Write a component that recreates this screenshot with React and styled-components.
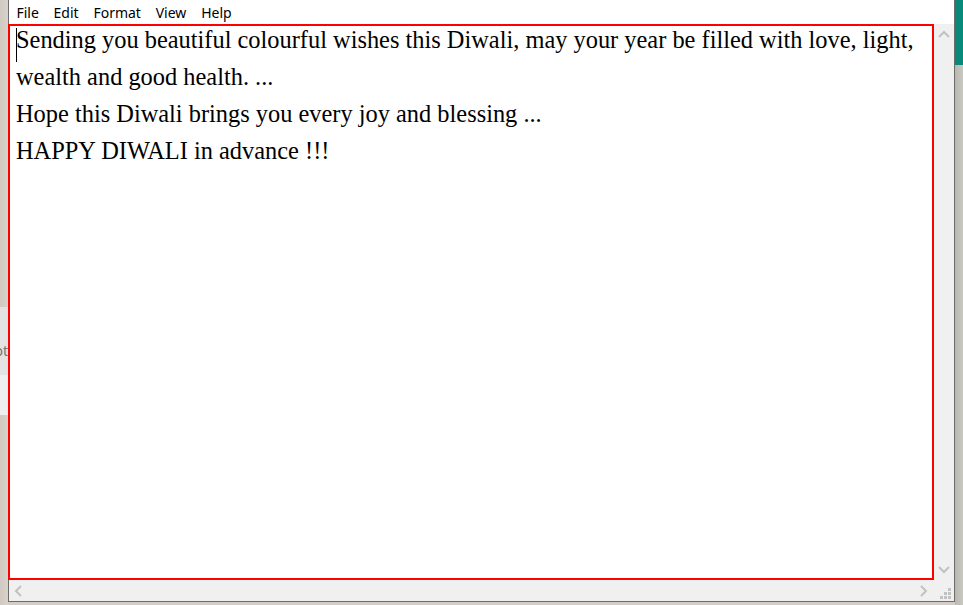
import React from "react";
import styled, { createGlobalStyle } from "styled-components";

const Global = createGlobalStyle`
  html, body { margin: 0; padding: 0; overflow: hidden; }
  body { width: 963px; height: 605px; background: #d3cdc6; }
`;

const Screen = styled.div`
  width: 963px;
  height: 605px;
  display: flex;
  background: #d3cdc6;
  overflow: hidden;
`;

const LeftDesk = styled.div`
  width: 8px;
  display: flex;
  flex-direction: column;
  background: linear-gradient(90deg, #d0cac3, #d8d2cb);
`;

const DeskGap = styled.div`
  height: ${(p) => p.$h}px;
  flex: none;
`;

const DeskPanel = styled.div`
  height: ${(p) => p.$h}px;
  flex: none;
  background: ${(p) => p.$bg};
  overflow: hidden;
  position: relative;
  font-family: "Noto Sans", sans-serif;
  font-size: 14px;
  color: #777;
`;

const ClippedText = styled.span`
  position: absolute;
  right: 0;
  top: ${(p) => p.$top}px;
  white-space: nowrap;
`;

const RightDesk = styled.div`
  width: 8px;
  display: flex;
  flex-direction: column;
`;

const Teal = styled.div`
  height: 65px;
  background: #078a79;
`;

const GreyStrip = styled.div`
  flex: 1;
  background: linear-gradient(90deg, #b9b8b0, #c8c8c1);
`;

const Column = styled.div`
  display: flex;
  flex-direction: column;
`;

const Window = styled.div`
  width: 945px;
  height: 601px;
  display: flex;
  flex-direction: column;
  background: #fff;
  border-left: 1px solid #6c6c6c;
  border-right: 1px solid #6c6c6c;
  border-bottom: 1px solid #6c6c6c;
`;

const MenuBar = styled.div`
  height: 24px;
  flex: none;
  display: flex;
  align-items: center;
  padding-left: 0;
  background: #fff;
  font-family: "Noto Sans", "Open Sans", sans-serif;
  font-size: 14px;
  color: #000;
`;

const MenuItem = styled.span`
  padding: 0 7.4px;
  line-height: 24px;
  margin-top: 1px;
`;

const Body = styled.div`
  flex: 1;
  display: flex;
  min-height: 0;
`;

const EditArea = styled.div`
  flex: 1;
  margin-left: -1px;
  border: 2px solid #ff0000;
  background: #fff;
  padding: 0 0 0 6px;
  position: relative;
  font-family: "Liberation Serif", "Times New Roman", serif;
  font-size: 24.4px;
  line-height: 37px;
  color: #000;
  overflow: hidden;
`;

const Lines = styled.div`
  margin-top: -5px;
`;

const Line = styled.div`
  white-space: nowrap;
`;

const Caret = styled.div`
  position: absolute;
  left: 6px;
  top: 2px;
  width: 1px;
  height: 34px;
  background: #000;
`;

const VScroll = styled.div`
  width: 20px;
  background: #f0f0f0;
  display: flex;
  flex-direction: column;
  justify-content: space-between;
  align-items: center;
  padding: 6px 0;
  box-sizing: border-box;
`;

const BottomRow = styled.div`
  height: 21px;
  flex: none;
  display: flex;
  background: #f0f0f0;
`;

const HScroll = styled.div`
  flex: 1;
  display: flex;
  justify-content: space-between;
  align-items: center;
  padding: 0 6px 0 5px;
`;

const Grip = styled.div`
  width: 20px;
  display: flex;
  align-items: flex-end;
  justify-content: flex-end;
  padding: 0 3px 2px 0;
  box-sizing: border-box;
`;

const Arrow = ({ dir }) => {
  const paths = {
    up: "M1 7 L6 2 L11 7",
    down: "M1 2 L6 7 L11 2",
    left: "M7 1 L2 6 L7 11",
    right: "M2 1 L7 6 L2 11",
  };
  const vertical = dir === "up" || dir === "down";
  return (
    <svg
      width={vertical ? 12 : 9}
      height={vertical ? 9 : 12}
      viewBox={vertical ? "0 0 12 9" : "0 0 9 12"}
    >
      <path d={paths[dir]} fill="none" stroke="#c2c2c2" strokeWidth="2" />
    </svg>
  );
};

const GripIcon = () => (
  <svg width="11" height="11" viewBox="0 0 11 11">
    {[
      [8, 0],
      [4, 4],
      [8, 4],
      [0, 8],
      [4, 8],
      [8, 8],
    ].map(([x, y]) => (
      <rect key={`${x}-${y}`} x={x} y={y} width="3" height="3" fill="#c2c2c2" />
    ))}
  </svg>
);

export default function App() {
  return (
    <>
      <Global />
      <Screen>
        <LeftDesk>
          <DeskGap $h={307} />
          <DeskPanel $h={68} $bg="#e3e3e3">
            <ClippedText $top={34}>ot</ClippedText>
          </DeskPanel>
          <DeskPanel $h={40} $bg="#efefef" />
        </LeftDesk>
        <Column>
          <Window>
            <MenuBar>
              <MenuItem>File</MenuItem>
              <MenuItem>Edit</MenuItem>
              <MenuItem>Format</MenuItem>
              <MenuItem>View</MenuItem>
              <MenuItem>Help</MenuItem>
            </MenuBar>
            <Body>
              <EditArea>
                <Caret />
                <Lines>
                  <Line>
                    Sending you beautiful colourful wishes this Diwali, may your year be filled with love, light,
                  </Line>
                  <Line>wealth and good health. ...</Line>
                  <Line>Hope this Diwali brings you every joy and blessing ...</Line>
                  <Line>HAPPY DIWALI in advance !!!</Line>
                </Lines>
              </EditArea>
              <VScroll>
                <Arrow dir="up" />
                <Arrow dir="down" />
              </VScroll>
            </Body>
            <BottomRow>
              <HScroll>
                <Arrow dir="left" />
                <Arrow dir="right" />
              </HScroll>
              <Grip>
                <GripIcon />
              </Grip>
            </BottomRow>
          </Window>
        </Column>
        <RightDesk>
          <Teal />
          <GreyStrip />
        </RightDesk>
      </Screen>
    </>
  );
}
